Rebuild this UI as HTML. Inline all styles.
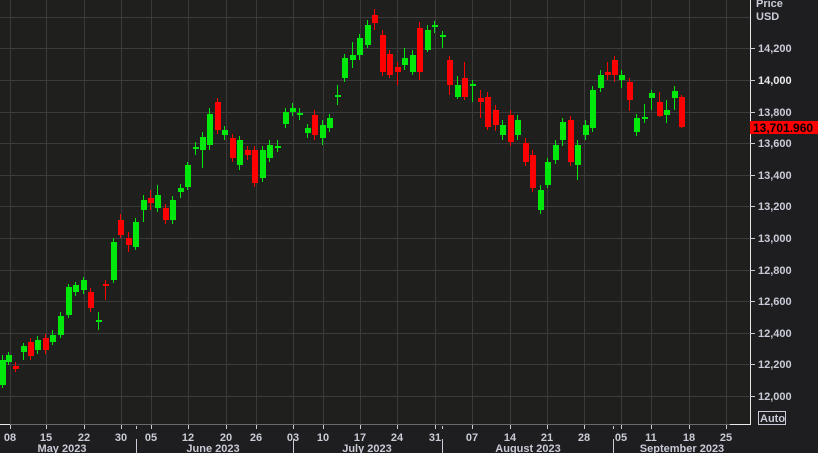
<!DOCTYPE html>
<html><head><meta charset="utf-8"><style>
html,body{margin:0;padding:0;background:#1e1e20;width:818px;height:453px;overflow:hidden}
svg{display:block}
text{font-family:"Liberation Sans",Tahoma,sans-serif;font-weight:bold;font-size:11px;fill:#c9cbd6}
</style></head><body>
<svg id="s" width="818" height="453" viewBox="0 0 818 453" xmlns="http://www.w3.org/2000/svg">
<rect x="0" y="0" width="750" height="424" fill="#1f201d"/>
<g id="grid" stroke="#3a3b3a" stroke-width="1"></g>
<g id="c"></g>
<line x1="750.5" y1="0" x2="750.5" y2="424" stroke="#e8e8e8"/>
<line x1="0" y1="424.5" x2="730" y2="424.5" stroke="#6a6a6a"/>
<line x1="730" y1="424.5" x2="751" y2="424.5" stroke="#e8e8e8"/>
<line x1="0" y1="424.5" x2="10" y2="424.5" stroke="#e8e8e8"/>
<text x="756" y="7">Price</text>
<text x="756" y="20">USD</text>
<g id="py"></g>
<rect x="750" y="121" width="68" height="13" fill="#ff0000"/>
<text x="753" y="132" style="fill:#000;font-size:12px">13,701.960</text>
<rect x="758.5" y="411.5" width="27" height="13" fill="none" stroke="#c9cbd6"/>
<text x="760" y="422">Auto</text>
<g id="dx"></g>
<text x="62" y="452" text-anchor="middle">May 2023</text>
<text x="213" y="452" text-anchor="middle">June 2023</text>
<text x="367" y="452" text-anchor="middle">July 2023</text>
<text x="528" y="452" text-anchor="middle">August 2023</text>
<text x="682" y="452" text-anchor="middle">September 2023</text>
<g stroke="#c9cbd6"><line x1="136.5" y1="439" x2="136.5" y2="453"/><line x1="293.5" y1="439" x2="293.5" y2="453"/><line x1="442.5" y1="439" x2="442.5" y2="453"/><line x1="613.5" y1="439" x2="613.5" y2="453"/>
<line x1="136.5" y1="426" x2="136.5" y2="429"/><line x1="442.5" y1="426" x2="442.5" y2="429"/><line x1="613.5" y1="426" x2="613.5" y2="429"/></g>
</svg>
<script>
var NS="http://www.w3.org/2000/svg";
function el(p,t,a,txt){var e=document.createElementNS(NS,t);for(var k in a)e.setAttribute(k,a[k]);if(txt)e.textContent=txt;document.getElementById(p).appendChild(e);}
var dx=[[10,"08"],[46,"15"],[84,"22"],[121,"30"],[151,"05"],[188,"12"],[226,"20"],[256,"26"],[293,"03"],[323,"10"],[360,"17"],[397,"24"],[435,"31"],[472,"07"],[510,"14"],[547,"21"],[584,"28"],[621,"05"],[651,"11"],[689,"18"],[726,"25"]];
dx.forEach(function(d){el("grid","line",{x1:d[0]+.5,y1:0,x2:d[0]+.5,y2:424});el("dx","line",{x1:d[0]+.5,y1:425,x2:d[0]+.5,y2:429,stroke:"#c9cbd6"});el("dx","text",{x:d[0],y:441,"text-anchor":"middle"},d[1]);});
for(var p=12000;p<=14400;p+=200){var y=Math.round(396-(p-12000)/200*31.6);el("grid","line",{x1:0,y1:y+.5,x2:750,y2:y+.5});
if(p<=14200){el("py","line",{x1:750,y1:y+.5,x2:755,y2:y+.5,stroke:"#c9cbd6"});el("py","text",{x:758,y:y+4,style:p==14000?"fill:#e8e8ee":""},(p+"").replace(/(\d)(\d{3})$/,"$1,$2"));}}
var C=[[2,"g",360,385,355,388],[8,"g",355,362,352,365],[15,"r",366,369,362,372],[23,"g",346,352,343,360],[30,"r",342,356,338,360],[37,"g",340,350,336,354],[45,"r",338,350,334,354],[52,"g",335,342,330,345],[60,"g",316,335,312,338],[68,"g",287,315,284,318],[75,"g",285,292,282,296],[83,"g",280,290,277,294],[90,"r",292,308,288,312],[98,"x",320,321,312,330],[105,"r",284,286,280,300],[113,"g",242,280,238,283],[120,"r",220,235,214,238],[128,"r",238,245,232,252],[135,"g",222,247,218,250],[143,"g",200,210,195,222],[150,"r",198,203,190,210],[157,"g",195,208,185,212],[165,"r",208,220,204,224],[172,"g",200,220,196,224],[180,"g",188,192,184,198],[187,"g",165,187,162,190],[195,"x",147,148,142,155],[202,"g",137,150,132,168],[209,"g",114,145,108,150],[217,"r",102,130,98,134],[224,"g",130,135,126,140],[232,"r",138,158,134,162],[239,"g",140,165,136,170],[247,"r",150,155,146,160],[254,"r",150,183,146,187],[262,"g",150,178,146,182],[269,"g",145,158,140,162],[277,"x",146,147,140,152],[285,"g",112,124,108,128],[292,"g",108,112,103,116],[299,"x",113,114,108,120],[307,"g",128,133,124,138],[314,"r",115,135,110,140],[322,"g",125,138,120,145],[329,"g",118,128,114,132],[337,"x",95,96,85,105],[344,"g",58,78,54,82],[352,"g",55,60,42,68],[359,"g",38,55,34,60],[367,"g",25,45,20,48],[374,"r",15,23,9,30],[382,"r",35,72,30,76],[389,"r",54,75,50,78],[397,"r",67,72,62,85],[404,"g",58,65,48,70],[412,"g",55,72,50,75],[419,"r",28,72,22,80],[427,"g",30,50,25,52],[434,"x",25,27,21,33],[442,"x",35,36,31,48],[449,"r",60,85,56,95],[457,"g",85,97,76,99],[464,"r",78,97,62,100],[472,"x",84,85,80,102],[480,"r",98,102,90,118],[487,"r",97,127,92,130],[495,"r",110,125,105,131],[502,"g",125,135,120,140],[510,"r",115,142,110,146],[517,"g",120,135,115,140],[525,"r",143,162,138,166],[532,"r",155,188,150,192],[540,"g",190,210,185,214],[547,"g",162,185,158,188],[555,"g",145,160,140,164],[562,"g",122,140,118,146],[570,"r",120,162,116,166],[577,"g",145,165,140,180],[585,"g",125,135,120,140],[592,"g",90,128,86,132],[600,"g",75,88,70,92],[607,"r",72,75,62,80],[614,"r",60,75,56,82],[621,"g",75,80,70,88],[629,"r",82,100,78,111],[636,"g",118,132,114,136],[644,"x",117,118,104,123],[651,"g",93,98,90,110],[659,"r",102,116,92,117],[666,"g",110,115,100,123],[674,"g",91,98,86,110],[681,"r",97,127,95,128]];
C.forEach(function(c){var col=c[1]=="r"?"#ff0000":"#00e80c";if(c[1]=="x")col="#00e80c";
el("c","line",{x1:c[0]+.5,y1:c[4],x2:c[0]+.5,y2:c[5],stroke:col});
var t=Math.min(c[2],c[3]),h=Math.max(2,Math.abs(c[3]-c[2]));el("c","rect",{x:c[0]-2,y:t,width:6,height:h,fill:col});});
</script>
</body></html>
